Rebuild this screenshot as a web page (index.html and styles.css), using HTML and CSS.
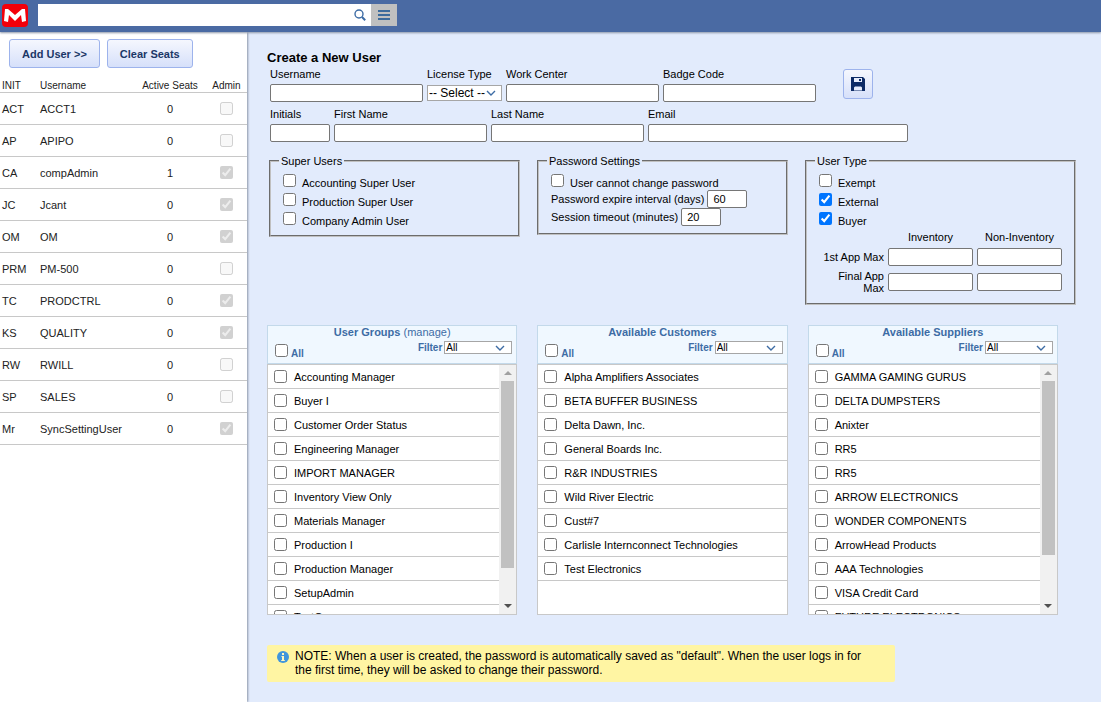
FILE: index.html
```
<!DOCTYPE html>
<html lang="en">
<head>
    <meta charset="utf-8">
    <title>Create a New User</title>
    <link rel="stylesheet" href="styles.css">
</head>
<body>
    <header class="topbar">
        <svg class="logo" viewBox="0 0 26 23">
            <rect width="26" height="23" rx="4" fill="#f40009"/>
            <path d="M2 17L3 5h3l7 6 7-6h3l1 12-4 1-1-7-6 6-6-6-1 7z" fill="#fff"/>
        </svg>
        <form class="search">
            <input type="text" aria-label="Search">
            <svg class="search-icon" viewBox="0 0 12 12" fill="none" stroke="#3d6ca5">
                <circle cx="5" cy="5" r="4" stroke-width="1.4"/>
                <path d="M8 8l3.2 3.2" stroke-width="2"/>
            </svg>
            <button type="button" class="menu-btn" aria-label="Menu">
                <svg width="12" height="10" viewBox="0 0 12 10"><path d="M0 1h12M0 5h12M0 9h12" stroke="#3c6b9c" stroke-width="2"/></svg>
            </button>
        </form>
    </header>

    <div class="page">
        <aside class="sidebar">
            <div class="actions">
                <button type="button" class="btn">Add User &gt;&gt;</button>
                <button type="button" class="btn">Clear Seats</button>
            </div>
            <table class="users">
                <thead>
                    <tr><th class="init">INIT</th><th>Username</th><th class="seats">Active Seats</th><th class="admin">Admin</th></tr>
                </thead>
                <tbody>
                    <tr><td>ACT</td><td>ACCT1</td><td class="seats">0</td><td class="admin"><input type="checkbox" aria-label="Admin" disabled></td></tr>
                    <tr><td>AP</td><td>APIPO</td><td class="seats">0</td><td class="admin"><input type="checkbox" aria-label="Admin" disabled></td></tr>
                    <tr><td>CA</td><td>compAdmin</td><td class="seats">1</td><td class="admin"><input type="checkbox" aria-label="Admin" disabled checked></td></tr>
                    <tr><td>JC</td><td>Jcant</td><td class="seats">0</td><td class="admin"><input type="checkbox" aria-label="Admin" disabled checked></td></tr>
                    <tr><td>OM</td><td>OM</td><td class="seats">0</td><td class="admin"><input type="checkbox" aria-label="Admin" disabled checked></td></tr>
                    <tr><td>PRM</td><td>PM-500</td><td class="seats">0</td><td class="admin"><input type="checkbox" aria-label="Admin" disabled></td></tr>
                    <tr><td>TC</td><td>PRODCTRL</td><td class="seats">0</td><td class="admin"><input type="checkbox" aria-label="Admin" disabled checked></td></tr>
                    <tr><td>KS</td><td>QUALITY</td><td class="seats">0</td><td class="admin"><input type="checkbox" aria-label="Admin" disabled checked></td></tr>
                    <tr><td>RW</td><td>RWILL</td><td class="seats">0</td><td class="admin"><input type="checkbox" aria-label="Admin" disabled></td></tr>
                    <tr><td>SP</td><td>SALES</td><td class="seats">0</td><td class="admin"><input type="checkbox" aria-label="Admin" disabled></td></tr>
                    <tr><td>Mr</td><td>SyncSettingUser</td><td class="seats">0</td><td class="admin"><input type="checkbox" aria-label="Admin" disabled checked></td></tr>
                </tbody>
            </table>
        </aside>

        <main class="content">
            <h1>Create a New User</h1>
            <div class="row">
                <label class="field">Username<input type="text"></label>
                <label class="field license">License Type
                    <select><option>-- Select --</option></select>
                </label>
                <label class="field">Work Center<input type="text"></label>
                <label class="field">Badge Code<input type="text"></label>
                <button type="button" class="btn save" aria-label="Save">
                    <svg width="14" height="14" viewBox="0 0 14 14">
                        <path d="M0 0h12l2 2v12.5H0z" fill="#0c2a66"/>
                        <path d="M3 1h8v4H3zM3 13.5v-3l1-1h6l1 1v3z" fill="#e6ecfc"/>
                        <path d="M8 2h2v2H8z" fill="#0c2a66"/>
                    </svg>
                </button>
            </div>
            <div class="row">
                <label class="field initials">Initials<input type="text"></label>
                <label class="field">First Name<input type="text"></label>
                <label class="field">Last Name<input type="text"></label>
                <label class="field email">Email<input type="text"></label>
            </div>

            <div class="settings">
                <fieldset>
                    <legend>Super Users</legend>
                    <label class="check"><input type="checkbox">Accounting Super User</label>
                    <label class="check"><input type="checkbox">Production Super User</label>
                    <label class="check"><input type="checkbox">Company Admin User</label>
                </fieldset>
                <fieldset>
                    <legend>Password Settings</legend>
                    <label class="check"><input type="checkbox">User cannot change password</label>
                    <label class="inline">Password expire interval (days) <input type="text" value="60"></label>
                    <label class="inline">Session timeout (minutes) <input type="text" value="20"></label>
                </fieldset>
                <fieldset>
                    <legend>User Type</legend>
                    <label class="check"><input type="checkbox">Exempt</label>
                    <label class="check"><input type="checkbox" checked>External</label>
                    <label class="check"><input type="checkbox" checked>Buyer</label>
                    <div class="limits">
                        <span></span><span class="head" id="inv">Inventory</span><span class="head" id="noninv">Non-Inventory</span>
                        <span class="side" id="first">1st App Max</span>
                        <input type="text" aria-labelledby="first inv">
                        <input type="text" aria-labelledby="first noninv">
                        <span class="side" id="final">Final App Max</span>
                        <input type="text" aria-labelledby="final inv">
                        <input type="text" aria-labelledby="final noninv">
                    </div>
                </fieldset>
            </div>

            <div class="panels">
                <section class="panel">
                    <div class="panel-head">
                        <h2>User Groups <a href="#">(manage)</a></h2>
                        <div class="tools">
                            <label class="all"><input type="checkbox">All</label>
                            <label class="filter">Filter <select><option>All</option></select></label>
                        </div>
                    </div>
                    <div class="list">
                        <ul>
                            <li><label><input type="checkbox">Accounting Manager</label></li>
                            <li><label><input type="checkbox">Buyer I</label></li>
                            <li><label><input type="checkbox">Customer Order Status</label></li>
                            <li><label><input type="checkbox">Engineering Manager</label></li>
                            <li><label><input type="checkbox">IMPORT MANAGER</label></li>
                            <li><label><input type="checkbox">Inventory View Only</label></li>
                            <li><label><input type="checkbox">Materials Manager</label></li>
                            <li><label><input type="checkbox">Production I</label></li>
                            <li><label><input type="checkbox">Production Manager</label></li>
                            <li><label><input type="checkbox">SetupAdmin</label></li>
                            <li><label><input type="checkbox">TestGroup</label></li>
                        </ul>
                        <div class="scrollbar">
                            <svg viewBox="0 0 8 4"><path d="M0 4l4-4 4 4z" fill="#a0a0a0"/></svg>
                            <div class="track"><div class="thumb" style="height: 86%"></div></div>
                            <svg viewBox="0 0 8 4"><path d="M0 0l4 4 4-4z" fill="#505050"/></svg>
                        </div>
                    </div>
                </section>

                <section class="panel">
                    <div class="panel-head">
                        <h2>Available Customers</h2>
                        <div class="tools">
                            <label class="all"><input type="checkbox">All</label>
                            <label class="filter">Filter <select><option>All</option></select></label>
                        </div>
                    </div>
                    <div class="list">
                        <ul>
                            <li><label><input type="checkbox">Alpha Amplifiers Associates</label></li>
                            <li><label><input type="checkbox">BETA BUFFER BUSINESS</label></li>
                            <li><label><input type="checkbox">Delta Dawn, Inc.</label></li>
                            <li><label><input type="checkbox">General Boards Inc.</label></li>
                            <li><label><input type="checkbox">R&amp;R INDUSTRIES</label></li>
                            <li><label><input type="checkbox">Wild River Electric</label></li>
                            <li><label><input type="checkbox">Cust#7</label></li>
                            <li><label><input type="checkbox">Carlisle Internconnect Technologies</label></li>
                            <li><label><input type="checkbox">Test Electronics</label></li>
                        </ul>
                    </div>
                </section>

                <section class="panel">
                    <div class="panel-head">
                        <h2>Available Suppliers</h2>
                        <div class="tools">
                            <label class="all"><input type="checkbox">All</label>
                            <label class="filter">Filter <select><option>All</option></select></label>
                        </div>
                    </div>
                    <div class="list">
                        <ul>
                            <li><label><input type="checkbox">GAMMA GAMING GURUS</label></li>
                            <li><label><input type="checkbox">DELTA DUMPSTERS</label></li>
                            <li><label><input type="checkbox">Anixter</label></li>
                            <li><label><input type="checkbox">RR5</label></li>
                            <li><label><input type="checkbox">RR5</label></li>
                            <li><label><input type="checkbox">ARROW ELECTRONICS</label></li>
                            <li><label><input type="checkbox">WONDER COMPONENTS</label></li>
                            <li><label><input type="checkbox">ArrowHead Products</label></li>
                            <li><label><input type="checkbox">AAA Technologies</label></li>
                            <li><label><input type="checkbox">VISA Credit Card</label></li>
                            <li><label><input type="checkbox">FUTURE ELECTRONICS</label></li>
                        </ul>
                        <div class="scrollbar">
                            <svg viewBox="0 0 8 4"><path d="M0 4l4-4 4 4z" fill="#a0a0a0"/></svg>
                            <div class="track"><div class="thumb" style="height: 80%"></div></div>
                            <svg viewBox="0 0 8 4"><path d="M0 0l4 4 4-4z" fill="#505050"/></svg>
                        </div>
                    </div>
                </section>
            </div>

            <div class="note">
                <svg width="12" height="12" viewBox="0 0 12 12">
                    <circle cx="6" cy="6" r="6" fill="#4096dc"/>
                    <path d="M5 2h2v2H5zM4.5 5H7v4h.8v1H4.2V9H5V6h-.5z" fill="#fff7c0"/>
                </svg>
                <p>NOTE: When a user is created, the password is automatically saved as "default". When the user logs in for the first time, they will be asked to change their password.</p>
            </div>
        </main>
    </div>
</body>
</html>
```
FILE: styles.css
```
* {box-sizing: border-box;}
body {
    margin: 0;
    min-height: 100vh;
    display: flex;
    flex-direction: column;
    background: #e2ebfc;
    font: 11px/14px "Liberation Sans", Arial, sans-serif;
    color: #000;
}
input, select, button {font-family: inherit; font-size: 11px; margin: 0;}
input[type=checkbox] {width: 13px; height: 13px; flex: none;}
input[type=text] {
    height: 18px;
    border: 1px solid #767676;
    border-radius: 2px;
    padding: 0 5px;
    background: #fff;
}
select {
    appearance: none;
    border: 1px solid #a6a6a6;
    border-radius: 0;
    padding: 0 1px;
    color: #000;
    background: #fff url("data:image/svg+xml,%3Csvg xmlns='http://www.w3.org/2000/svg' width='10' height='6'%3E%3Cpath d='M1 1l4 4 4-4' fill='none' stroke='%233d6ca5' stroke-width='1.4'/%3E%3C/svg%3E") no-repeat right 6px center;
}

/* top bar */
.topbar {
    position: relative;
    display: flex;
    align-items: flex-start;
    gap: 10px;
    height: 32px;
    padding: 4px 2px;
    background: #4a6aa3;
    box-shadow: 0 1px 2px #8c96a8;
}
.logo {width: 26px; height: 23px;}
.search {position: relative; display: flex; width: 359px; height: 22px;}
.search input[type=text] {flex: 1; height: 22px; border: 0; border-radius: 0; padding-right: 20px;}
.search-icon {position: absolute; right: 31px; top: 5px; width: 12px; height: 12px;}
.menu-btn {
    display: flex;
    align-items: center;
    justify-content: center;
    width: 26px;
    border: 0;
    padding: 0;
    background: #c0c0c0;
}

.page {flex: 1; display: flex;}

/* seats list */
.sidebar {
    flex: 0 0 247px;
    background: #fff;
    box-shadow: 1px 0 2px #8c96a8;
}
.actions {display: flex; gap: 7px; padding: 7px 9px 6px;}
.btn {
    height: 29px;
    padding: 0 12px;
    border: 1px solid #9db3ec;
    border-radius: 3px;
    background: linear-gradient(#f5f7fe, #d6e0fa);
    font-weight: bold;
    color: #1b3767;
}
.users {width: 100%; border-collapse: collapse; color: #222;}
.users th {
    height: 18px;
    padding: 6px 0 0 2px;
    border-bottom: 1px solid #c8c8c8;
    font-size: 10px;
    line-height: 12px;
    font-weight: normal;
    text-align: left;
}
.users td {height: 32px; padding: 0 0 0 2px; border-bottom: 1px solid #c8c8c8;}
.users .init {width: 38px;}
.users .seats {width: 72px; padding-left: 0; text-align: center;}
.users .admin {width: 41px; padding-left: 0; text-align: center;}
.users input {display: block; margin: 0 auto;}

/* form */
.content {flex: 1; min-width: 0; padding: 18px 24px 20px 20px;}
h1 {margin: 0; font-size: 13px; line-height: 15px;}
.row {display: flex; gap: 4px; height: 40px; padding: 2px 0 0 3px;}
.field {flex: 0 1 153px; min-width: 0; display: flex; flex-direction: column; gap: 3px;}
.field input {width: 100%;}
.license {flex-basis: 75px;}
.license select {height: 16px; margin-top: 1px; font-size: 12px; background-position: right 5px center;}
.initials {flex-basis: 60px;}
.email {flex-basis: 260px;}
.save {width: 30px; height: 30px; margin: 2px 0 0 23px; padding: 0;}
.save svg {display: block; margin: 0 auto;}

.settings {
    display: grid;
    grid-template-columns: 251fr 251fr 271fr;
    gap: 17px;
    align-items: start;
    margin-top: 9px;
    padding: 0 1px 0 2px;
}
fieldset {
    min-width: 0;
    margin: 0;
    border: 2px groove #c0c0c0;
    padding: 3px 12px 7px;
}
legend {padding: 0 2px; margin-left: -4px;}
.check {display: flex; align-items: flex-end; gap: 6px; height: 19px;}
.check input {margin-bottom: 3px;}
.inline {display: flex; align-items: center; gap: 3px; height: 18px;}
.inline input {width: 40px;}
.limits {
    display: grid;
    grid-template-columns: 65px 1fr 1fr;
    gap: 1px 4px;
    align-items: center;
    padding: 2px 0;
}
.limits input {width: 100%; min-width: 0;}
.head {text-align: center;}
.side {line-height: 12px; min-height: 24px; text-align: right; display: flex; align-items: center; justify-content: flex-end;}

/* pick lists */
.panels {
    display: grid;
    grid-template-columns: repeat(3, 1fr);
    gap: 20px;
    margin: 20px 19px 0 0;
}
.panel-head {
    height: 39px;
    border: 1px solid #c3d9ea;
    background: #f0f8ff;
    color: #3d6ca5;
}
h2 {margin: 0; font-size: 11px; line-height: 12px; text-align: center;}
h2 a {font-weight: normal; color: inherit; text-decoration: none;}
.tools {display: flex; justify-content: space-between; padding: 0 4px 0 7px;}
.all {display: flex; align-items: flex-end; gap: 3px; height: 22px; font-size: 10px; line-height: 12px; font-weight: bold;}
.all input {margin-bottom: 3px;}
.filter {display: flex; align-items: flex-start; gap: 2px; padding-top: 3px; font-size: 10px; line-height: 13px; font-weight: bold;}
.filter select {width: 68px; height: 13px; font-size: 10px; line-height: 11px;}
.list {display: flex; height: 251px; border: 1px solid #c8c8c8; background: #fff; overflow: hidden;}
.list ul {flex: 1; margin: 0; padding: 0; list-style: none;}
.list li {height: 24px; border-bottom: 1px solid #c8c8c8;}
.list label {display: flex; align-items: center; gap: 7px; height: 23px; padding-left: 6px;}
.scrollbar {display: flex; flex-direction: column; align-items: center; width: 17px; padding: 6px 0; background: #f1f1f1;}
.scrollbar svg {width: 8px; height: 4px;}
.track {flex: 1; width: 13px; margin: 6px 0;}
.thumb {background: #c1c1c1;}

.note {
    display: flex;
    gap: 6px;
    max-width: 628px;
    margin-top: 30px;
    padding: 4px 20px 5px 10px;
    border-radius: 2px;
    background: #fff5a3;
    font-size: 12px;
}
.note svg {flex: none; margin-top: 2px;}
.note p {margin: 0;}
```
